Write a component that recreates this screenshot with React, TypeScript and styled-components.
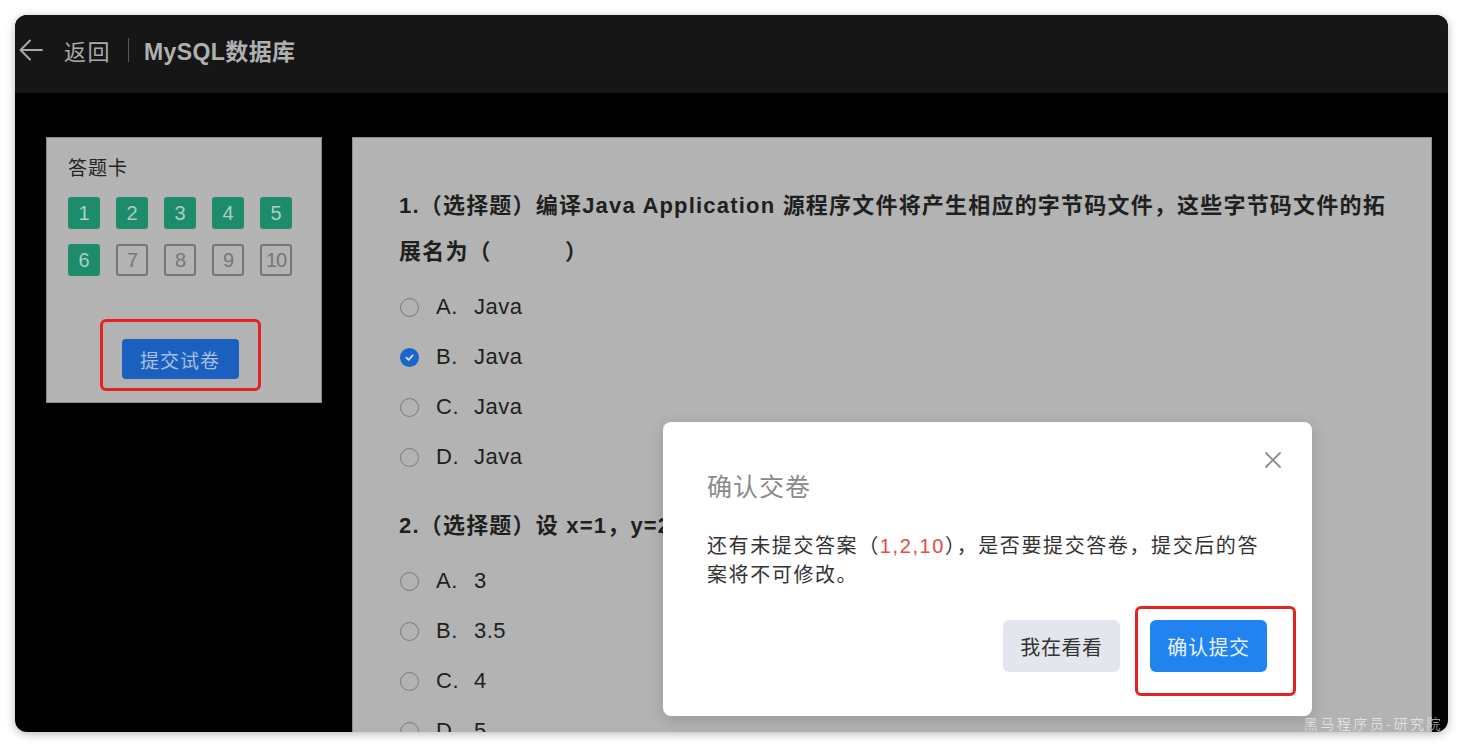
import React from "react";
import styled, { createGlobalStyle } from "styled-components";

const GlobalStyle = createGlobalStyle`
  html, body { margin: 0; padding: 0; background: #ffffff; }
  body { font-family: "Liberation Sans", "Noto Sans CJK SC", sans-serif; }
  * { box-sizing: border-box; }
`;

const Frame = styled.div`
  position: relative;
  width: 1463px;
  height: 749px;
  padding: 15px;
  background: #ffffff;
  overflow: hidden;
`;

const Window = styled.div`
  position: relative;
  width: 1433px;
  height: 717px;
  border-radius: 12px;
  overflow: hidden;
  background: #000000;
  box-shadow: 0 2px 10px rgba(0, 0, 0, 0.28);
  display: flex;
  flex-direction: column;
`;

const Header = styled.header`
  height: 78px;
  flex: 0 0 78px;
  background: #161616;
  display: flex;
  align-items: center;
  padding: 0 0 9px 3px;
  color: #a9a9a9;
`;

const BackIcon = styled.svg`
  width: 26px;
  height: 26px;
  margin-right: 20px;
`;

const BackText = styled.span`
  font-family: "Noto Sans CJK SC", sans-serif;
  font-size: 22px;
  letter-spacing: 1.5px;
  color: #a9a9a9;
`;

const Divider = styled.span`
  width: 1px;
  height: 24px;
  background: #5a5a5a;
  margin: 0 15px 0 17px;
`;

const Title = styled.span`
  font-family: "Liberation Sans", "Noto Sans CJK SC", sans-serif;
  font-size: 23px;
  font-weight: 600;
  color: #b0b0b0;
  letter-spacing: 0.4px;
`;

const Body = styled.div`
  flex: 1;
  display: flex;
  align-items: flex-start;
  gap: 30px;
  padding: 44px 16px 0 31px;
  min-height: 0;
`;

const CardPanel = styled.aside`
  width: 276px;
  height: 266px;
  flex: 0 0 276px;
  background: #b3b3b3;
  border: 1px solid #8c8c8c;
  padding: 17px 29px 0 21px;
  display: flex;
  flex-direction: column;
`;

const CardTitle = styled.div`
  font-family: "Noto Sans CJK SC", sans-serif;
  font-size: 19px;
  line-height: 24px;
  letter-spacing: 1px;
  color: #222222;
`;

const NumGrid = styled.div`
  margin-top: 18px;
  display: grid;
  grid-template-columns: repeat(5, 32px);
  column-gap: 16px;
  row-gap: 15px;
`;

const NumBox = styled.div<{ $done: boolean }>`
  width: 32px;
  height: 32px;
  border-radius: 3px;
  display: flex;
  align-items: center;
  justify-content: center;
  font-family: "Liberation Sans", sans-serif;
  font-size: 20px;
  background: ${(p) => (p.$done ? "#1e8b6d" : "transparent")};
  border: ${(p) => (p.$done ? "none" : "2px solid #767676")};
  color: ${(p) => (p.$done ? "#aacfc3" : "#767676")};
  letter-spacing: ${(p) => (p.$done ? "0" : "-1px")};
`;

const Highlight = styled.div<{ $pad: string }>`
  border: 3px solid #e52222;
  border-radius: 6px;
  padding: ${(p) => p.$pad};
`;

const SubmitWrap = styled.div`
  margin-top: 43px;
  display: flex;
  justify-content: center;
`;

const SubmitButton = styled.button`
  width: 117px;
  height: 40px;
  border: none;
  border-radius: 4px;
  background: #1b5fbf;
  color: #a9bfe0;
  font-family: "Noto Sans CJK SC", sans-serif;
  font-size: 19px;
  letter-spacing: 1px;
  display: flex;
  align-items: center;
  justify-content: center;
  padding: 0;
`;

const MainPanel = styled.main`
  flex: 1;
  align-self: stretch;
  background: #b3b3b3;
  border: 1px solid #8c8c8c;
  border-bottom: none;
  padding: 45px 0 0 46px;
  color: #1f1f1f;
`;

const Question = styled.section`
  & + & {
    margin-top: 21px;
  }
`;

const QTitle = styled.div`
  font-family: "Liberation Sans", "Noto Sans CJK SC", sans-serif;
  font-size: 22px;
  line-height: 46px;
  font-weight: 600;
  white-space: nowrap;
  letter-spacing: 1.2px;
`;

const Options = styled.ul`
  list-style: none;
  margin: 7px 0 0;
  padding: 0;
`;

const OptionRow = styled.li`
  height: 50px;
  display: flex;
  align-items: center;
  font-family: "Liberation Sans", "Noto Sans CJK SC", sans-serif;
  font-size: 22px;
  font-weight: 500;
  letter-spacing: 0.5px;
`;

const Radio = styled.span<{ $checked: boolean }>`
  width: 19px;
  height: 19px;
  border-radius: 50%;
  margin-left: 1px;
  margin-right: 17px;
  border: ${(p) => (p.$checked ? "none" : "1.5px solid #7a7a7a")};
  background: ${(p) => (p.$checked ? "#1a66cc" : "transparent")};
  display: flex;
  align-items: center;
  justify-content: center;
`;

const OptKey = styled.span`
  width: 38px;
`;

const Dialog = styled.div`
  position: absolute;
  left: 648px;
  top: 407px;
  width: 649px;
  height: 294px;
  background: #ffffff;
  border-radius: 8px;
  box-shadow: 0 4px 16px rgba(0, 0, 0, 0.15);
  padding: 47px 16px 19px 44px;
  display: flex;
  flex-direction: column;
`;

const CloseButton = styled.button`
  position: absolute;
  top: 29px;
  right: 30px;
  width: 18px;
  height: 18px;
  padding: 0;
  border: none;
  background: transparent;
  display: flex;
`;

const DialogTitle = styled.h2`
  margin: 0;
  font-family: "Noto Sans CJK SC", sans-serif;
  font-size: 25px;
  line-height: 32px;
  font-weight: 400;
  color: #8a8a8a;
  letter-spacing: 1px;
`;

const DialogText = styled.p`
  margin: 31px 0 0;
  font-family: "Liberation Sans", "Noto Sans CJK SC", sans-serif;
  font-size: 20px;
  line-height: 29px;
  color: #333333;
  white-space: nowrap;
  letter-spacing: 1.6px;
`;

const Red = styled.span`
  color: #e84848;
`;

const Footer = styled.div`
  margin-top: 16px;
  display: flex;
  justify-content: flex-end;
  align-items: flex-start;
  gap: 15px;
`;

const DlgButton = styled.button<{ $primary?: boolean }>`
  width: 117px;
  height: 52px;
  border: none;
  border-radius: 6px;
  padding: 0;
  font-family: "Noto Sans CJK SC", sans-serif;
  font-size: 20px;
  letter-spacing: 0.6px;
  background: ${(p) => (p.$primary ? "#2183f0" : "#e3e6ed")};
  color: ${(p) => (p.$primary ? "#eaf2ff" : "#333333")};
  margin-top: ${(p) => (p.$primary ? "0" : "14px")};
`;

const Watermark = styled.div`
  position: absolute;
  right: 20px;
  top: 713px;
  font-family: "Noto Sans CJK SC", sans-serif;
  font-weight: 300;
  font-size: 14px;
  letter-spacing: 2.5px;
  color: rgba(255, 255, 255, 0.75);
`;

const q1 = ["A", "B", "C", "D"];
const q2: [string, string][] = [
  ["A", "3"],
  ["B", "3.5"],
  ["C", "4"],
  ["D", "5"],
];

const Check = () => (
  <svg width="11" height="11" viewBox="0 0 12 12">
    <path d="M2.5 6.2 L5 8.6 L9.6 3.6" fill="none" stroke="#dbe6f5" strokeWidth="1.8" strokeLinecap="round" strokeLinejoin="round" />
  </svg>
);

export default function App() {
  return (
    <>
      <GlobalStyle />
      <Frame>
        <Window>
          <Header>
            <BackIcon viewBox="0 0 26 26">
              <path d="M24 13 H3 M12 3.5 L2.5 13 L12 22.5" fill="none" stroke="#a9a9a9" strokeWidth="2" strokeLinecap="round" strokeLinejoin="round" />
            </BackIcon>
            <BackText>返回</BackText>
            <Divider />
            <Title>MySQL数据库</Title>
          </Header>
          <Body>
            <CardPanel>
              <CardTitle>答题卡</CardTitle>
              <NumGrid>
                {Array.from({ length: 10 }, (_, i) => (
                  <NumBox key={i} $done={i < 6}>
                    {i + 1}
                  </NumBox>
                ))}
              </NumGrid>
              <SubmitWrap>
                <Highlight $pad="17px 19px 9px 19px">
                  <SubmitButton>提交试卷</SubmitButton>
                </Highlight>
              </SubmitWrap>
            </CardPanel>
            <MainPanel>
              <Question>
                <QTitle>
                  1.（选择题）编译Java Application 源程序文件将产生相应的字节码文件，这些字节码文件的拓
                  <br />
                  展名为（&nbsp;&nbsp;&nbsp;&nbsp;&nbsp;&nbsp;&nbsp;&nbsp;&nbsp;&nbsp;）
                </QTitle>
                <Options>
                  {q1.map((k) => (
                    <OptionRow key={k}>
                      <Radio $checked={k === "B"}>{k === "B" && <Check />}</Radio>
                      <OptKey>{k}.</OptKey>
                      <span>Java</span>
                    </OptionRow>
                  ))}
                </Options>
              </Question>
              <Question>
                <QTitle>2.（选择题）设 x=1，y=2，z=3，则表达式 y+=z--/++x 的值是（&nbsp;&nbsp;&nbsp;&nbsp;&nbsp;&nbsp;）</QTitle>
                <Options>
                  {q2.map(([k, v]) => (
                    <OptionRow key={k}>
                      <Radio $checked={false} />
                      <OptKey>{k}.</OptKey>
                      <span>{v}</span>
                    </OptionRow>
                  ))}
                </Options>
              </Question>
            </MainPanel>
          </Body>
          <Dialog>
            <CloseButton aria-label="close">
              <svg width="18" height="18" viewBox="0 0 18 18">
                <path d="M2 2 L16 16 M16 2 L2 16" stroke="#8a8a8a" strokeWidth="1.8" strokeLinecap="round" />
              </svg>
            </CloseButton>
            <DialogTitle>确认交卷</DialogTitle>
            <DialogText>
              还有未提交答案（<Red>1,2,10</Red>），是否要提交答卷，提交后的答
              <br />
              案将不可修改。
            </DialogText>
            <Footer>
              <DlgButton>我在看看</DlgButton>
              <Highlight $pad="11px 26px 21px 12px">
                <DlgButton $primary>确认提交</DlgButton>
              </Highlight>
            </Footer>
          </Dialog>
        </Window>
        <Watermark>黑马程序员-研究院</Watermark>
      </Frame>
    </>
  );
}
